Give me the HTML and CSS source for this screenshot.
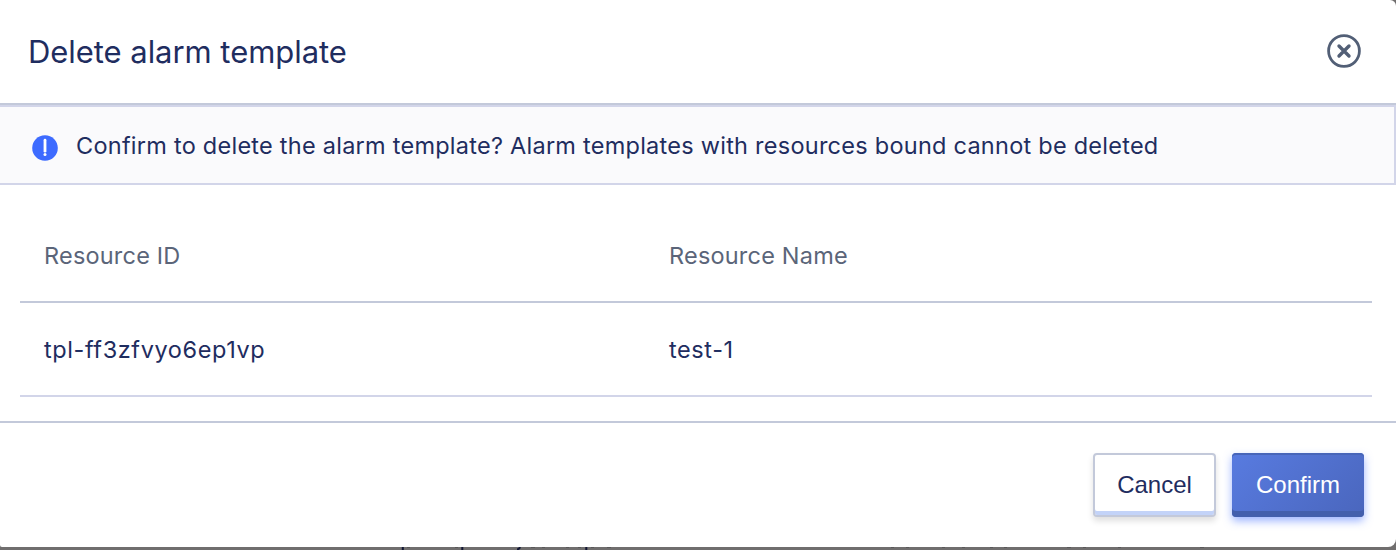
FILE: index.html
```html
<!DOCTYPE html>
<html lang="en">
<head>
<meta charset="utf-8">
<title>Delete alarm template</title>
<link rel="stylesheet" href="styles.css">
</head>
<body>
<section class="dialog" role="dialog" aria-labelledby="title">
  <header class="dialog-header">
    <h1 class="title" id="title">Delete alarm template</h1>
    <button class="close" aria-label="Close">
      <svg width="34" height="34" viewBox="0 0 34 34" fill="none" stroke="#525f76">
        <circle cx="17" cy="17" r="15.4" stroke-width="2.8"/>
        <path d="M12 12l10 10M22 12L12 22" stroke-width="3.4" stroke-linecap="round"/>
      </svg>
    </button>
  </header>
  <div class="notice">
    <svg class="notice-icon" width="26" height="26" viewBox="0 0 26 26">
      <circle cx="13" cy="13" r="12.8" fill="#3d6bff"/>
      <path d="M13 5.2v11" stroke="#fff" stroke-width="2.8" stroke-linecap="round"/>
      <circle cx="13" cy="19.6" r="1.5" fill="#fff"/>
    </svg>
    <p class="notice-text">Confirm to delete the alarm template? Alarm templates with resources bound cannot be deleted</p>
  </div>
  <div class="content">
    <table class="resources">
      <thead><tr><th>Resource ID</th><th>Resource Name</th></tr></thead>
      <tbody><tr><td>tpl-ff3zfvyo6ep1vp</td><td>test-1</td></tr></tbody>
    </table>
  </div>
  <footer class="dialog-footer">
    <button class="button cancel">Cancel</button>
    <button class="button confirm">Confirm</button>
  </footer>
</section>
<svg class="backdrop-text" width="1396" height="3" viewBox="0 0 1396 3">
  <path d="M402.8 0v3M462.3 0v3M586.3 0v3M520 0q-.6 2.2-3 2.4" fill="none" stroke="#111633" stroke-width="2"/>
  <path d="M407 .3h3M455 .3h3M531 .3h4M542 .3h3M566 .3h3M578 .3h3M591 .3h3M607 .3h4M891 .3h3M906 .3h3M942 .3h3M962 .3h3M990 .3h3M1004 .3h3M1067 .3h4M1083 .3h3M1118 .3h3M1200 .3h4" stroke="#4d4b4e" stroke-width=".8"/>
</svg>
</body>
</html>
```

FILE: styles.css
```css
* { box-sizing: border-box; }
html, body { margin: 0; height: 550px; overflow: hidden; background: #706e6e; }
body { font-family: Inter, "Liberation Sans", sans-serif; color: #1f2d5f; }
.dialog { height: 547px; display: flex; flex-direction: column; background: #fff; border-radius: 0 6px 8px 2px; overflow: hidden; }
.dialog-header { height: 105px; flex: none; display: flex; align-items: center; justify-content: space-between; padding: 0 35px 1px 28px; border-bottom: 2px solid #c3c9da; }
.title { margin: 0; padding-top: 1px; font-size: 31px; line-height: 40px; font-weight: 400; letter-spacing: -0.05px; }
.close { display: flex; border: 0; padding: 0; background: none; }
.notice { height: 80px; flex: none; display: flex; align-items: center; gap: 18px; padding: 0 0 0 32px; background: #fafafc; border: 2px solid #d2d5e9; border-left: 0; }
.notice-icon { flex: none; margin-top: 5px; }
.notice-text { margin: 0; padding-top: 2px; font-size: 23.5px; line-height: 32px; letter-spacing: 0.25px; white-space: nowrap; }
.content { height: 238px; flex: none; padding: 25px 24px 0 20px; border-bottom: 2px solid #c3c9da; }
.resources { width: 100%; border-collapse: separate; border-spacing: 0; table-layout: fixed; }
.resources th, .resources td { padding: 2px 0 0 24px; text-align: left; font-size: 23.5px; font-weight: 400; line-height: 32px; letter-spacing: 0.2px; }
.resources th { height: 93px; padding-top: 1px; color: #5b6579; border-bottom: 2px solid #c3c9da; }
.resources td { height: 94px; letter-spacing: 0.6px; border-bottom: 2px solid #d2d5e9; }
.resources th:first-child { width: 625px; }
.dialog-footer { flex: 1; display: flex; justify-content: flex-end; align-items: flex-start; gap: 16px; padding: 30px 32px 0; }
.button { height: 64px; padding: 0; border-radius: 4px; font: 24px/32px "Liberation Sans", Arial, sans-serif; }
.cancel { width: 123px; color: #1f2d5f; background: #fff; border: 2px solid #c3c9da; box-shadow: inset 0 -4px #c3d3f8, 0 4px 6px rgba(0, 0, 0, .13); }
.confirm { width: 132px; color: #fff; background: linear-gradient(135deg, #587be0, #4a66bd); border: 0; box-shadow: inset 0 2px #4765b9, inset 0 -6px #435fac, 0 4px 8px rgba(61, 107, 255, .5); }
.backdrop-text { display: block; }
```
